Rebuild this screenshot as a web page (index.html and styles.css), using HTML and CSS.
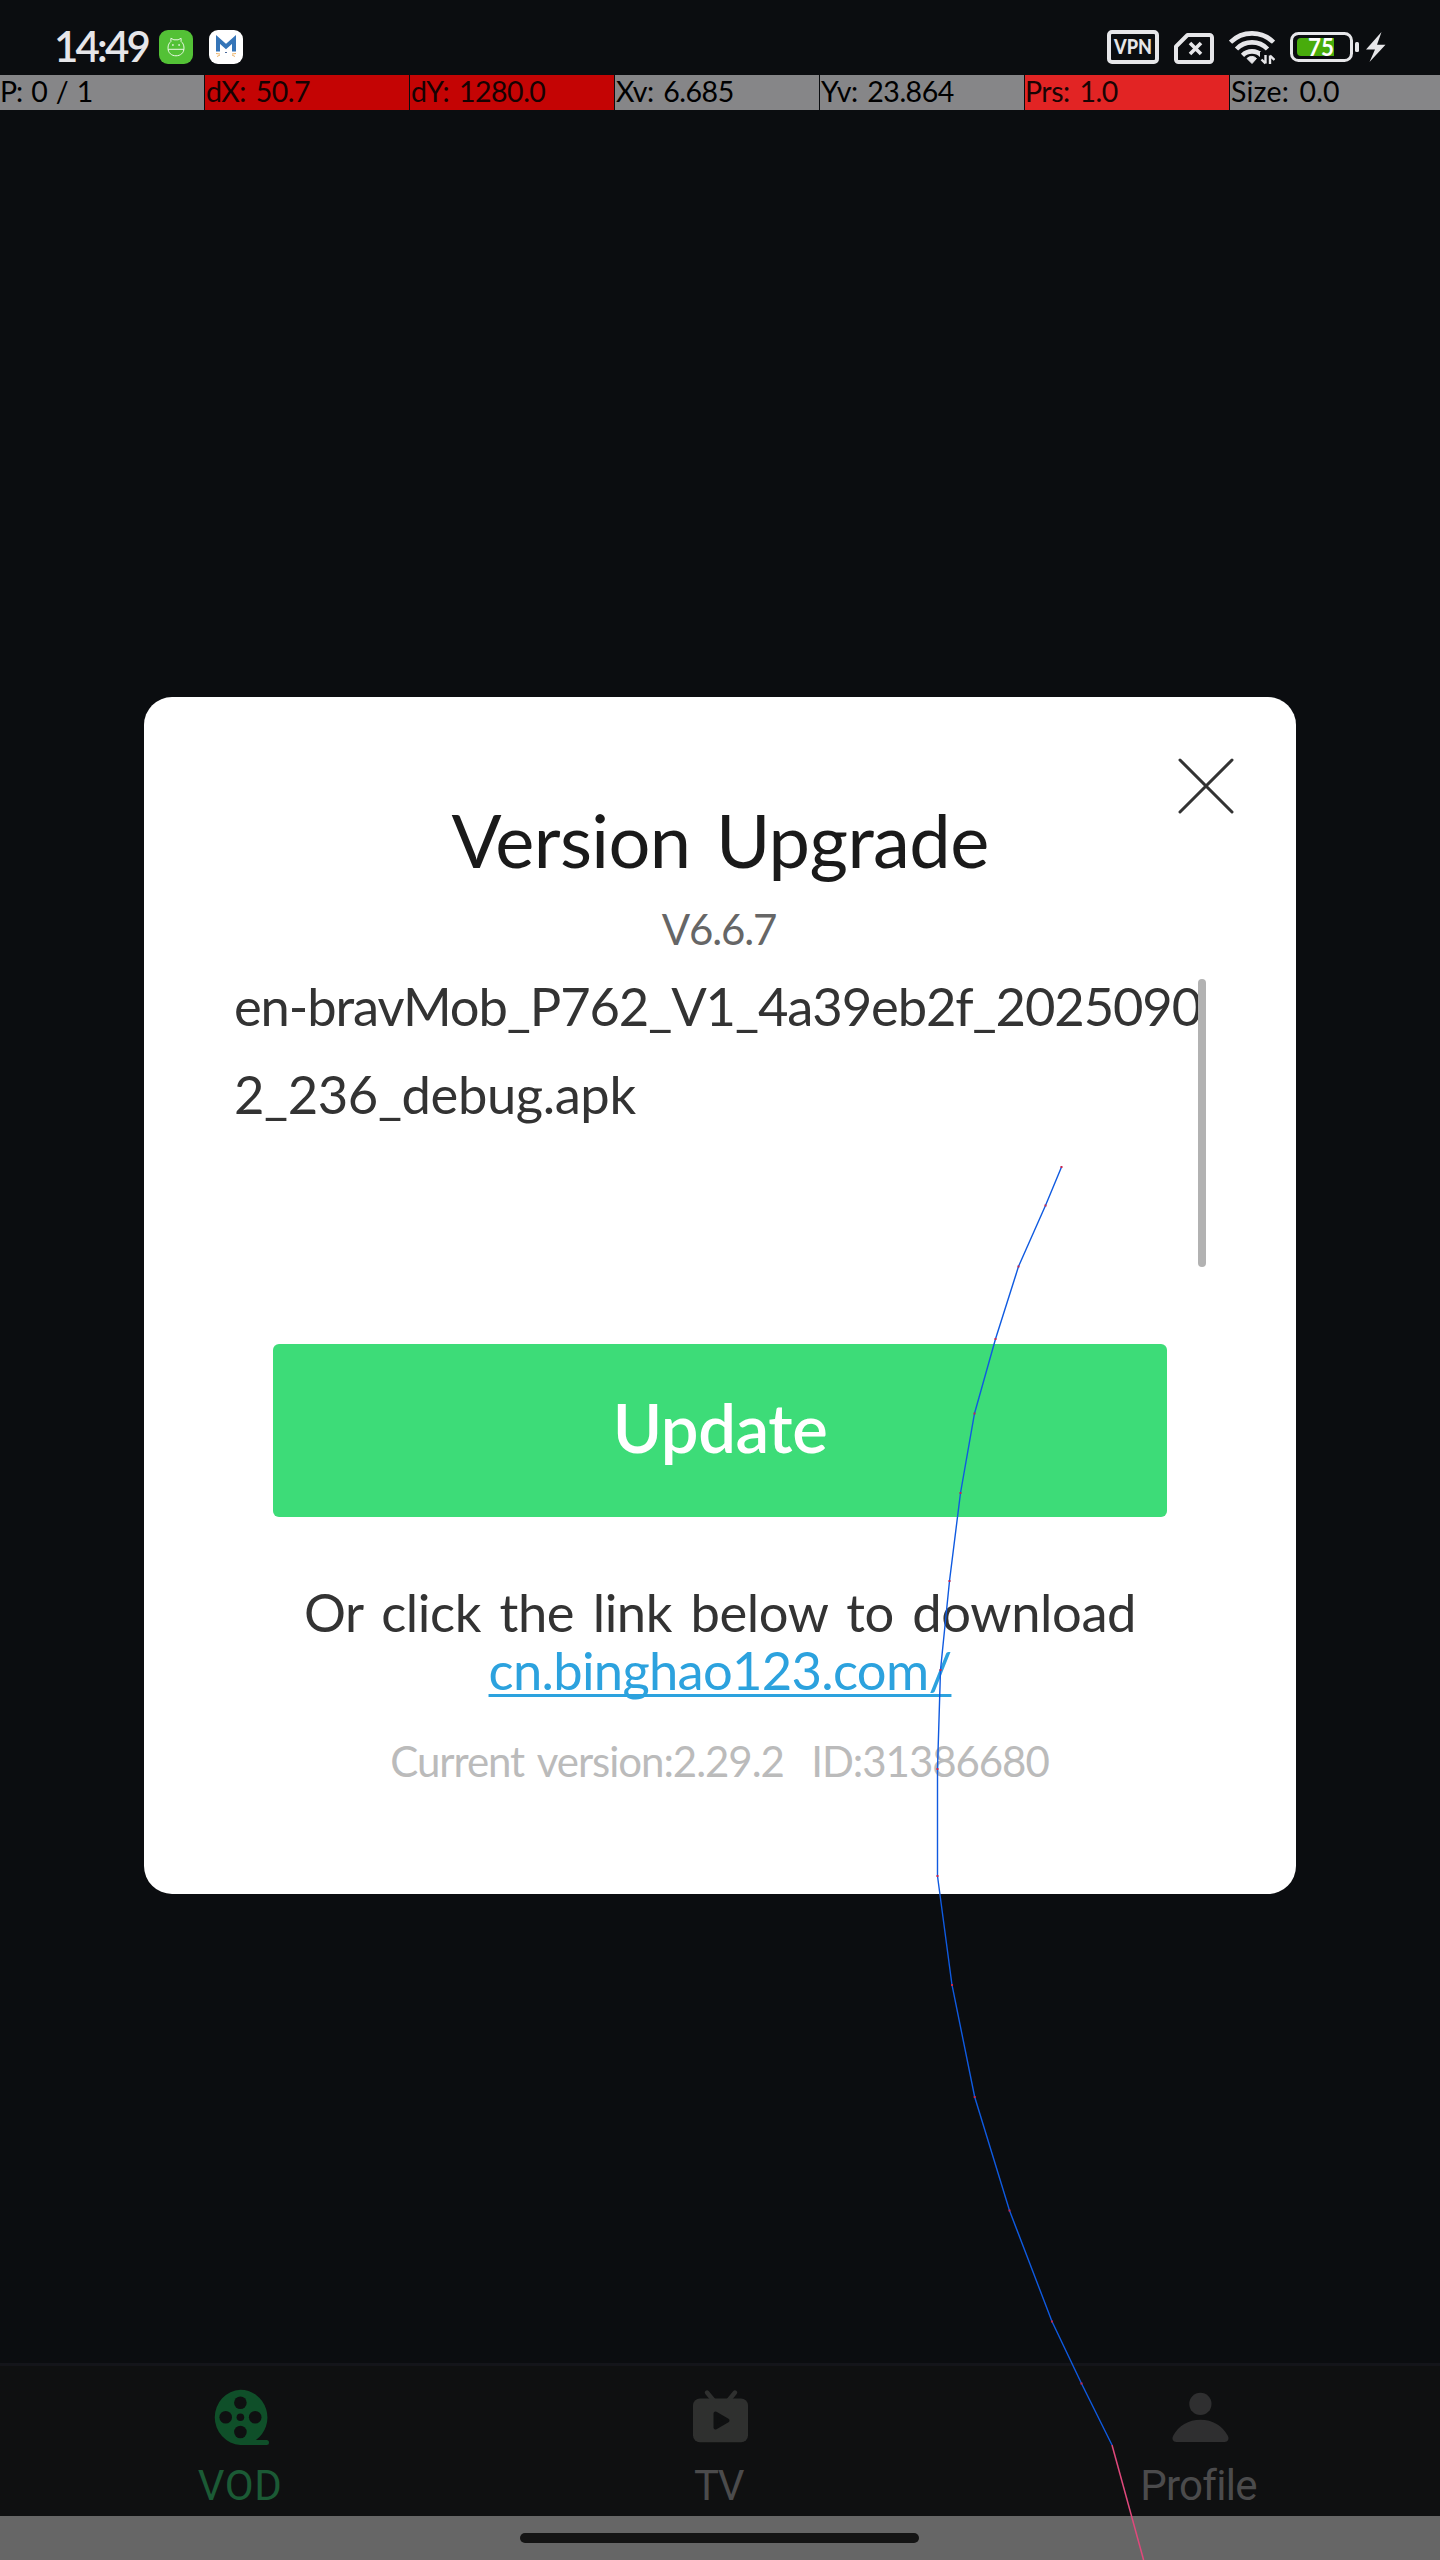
FILE: index.html
```html
<!DOCTYPE html>
<html lang="en">
<head>
<meta charset="utf-8">
<title>Version Upgrade</title>
<link rel="stylesheet" href="styles.css">
</head>
<body>
<div class="screen">
  <header class="status">
    <div class="status-left">
      <span class="clock">14:49</span>
      <svg class="app-icon" viewBox="0 0 34 34">
        <rect width="34" height="34" rx="9" fill="#53c136"/>
        <path d="M9 18.2c0-3.500 1.200-5.200 2.900-6.700V8.300l3 1.500h4.200l3-1.500v3.200c1.700 1.500 2.900 3.200 2.900 6.700 0 4.800-3.600 7.600-8 7.600s-8-2.800-8-7.600zM9 19.300h16" fill="none" stroke="#e9f9e4" stroke-width="1"/>
        <path d="M13.200 15h1.400M19.400 15h1.400" stroke="#fff" stroke-width="1.400"/>
      </svg>
      <svg class="app-icon" viewBox="0 0 34 34">
        <rect width="34" height="34" rx="9" fill="#fff"/>
        <path d="M9 21.500V9.500l8 7 8-7v12" fill="none" stroke="#3575b8" stroke-width="4"/>
        <path d="M7 23.500l4 .5M8 26.500l3-1.500M27 23.500l-4 .5M26 26.500l-3-1.500" stroke="#eeb56a" stroke-width="1"/>
        <path d="M16 22.500h2" stroke="#4b6a9a" stroke-width="1"/>
      </svg>
    </div>
    <div class="status-right">
      <svg class="vpn" viewBox="0 0 52 34">
        <rect x="2" y="2" width="48" height="30" rx="3" fill="none" stroke="#e6e6e9" stroke-width="4"/>
        <text x="26" y="24" text-anchor="middle" textLength="38" lengthAdjust="spacingAndGlyphs" class="vpn-text">VPN</text>
      </svg>
      <svg class="sim" viewBox="0 0 40 34">
        <path d="M13.500 5H35.500a2.500 2.500 0 0 1 2.500 2.500V29.500a2.500 2.500 0 0 1-2.500 2.500H4.500A2.500 2.500 0 0 1 2 29.500V16.500z" fill="none" stroke="#e6e6e9" stroke-width="4" stroke-linejoin="round"/>
        <path d="M16 13l11 11M27 13L16 24" stroke="#e6e6e9" stroke-width="3.600"/>
      </svg>
      <svg class="wifi" viewBox="0 0 46 36">
        <g fill="none" stroke="#e6e6e9" stroke-width="4.600">
          <path d="M1.500 13.200A30.500 30.500 0 0 1 44.500 13.200"/>
          <path d="M7.500 20A21.500 21.500 0 0 1 38.500 20"/>
          <path d="M13.500 26.300A13.500 13.500 0 0 1 32.500 26.300"/>
        </g>
        <path d="M18 29.500a6.500 6.500 0 0 1 9.500 0L23 34.500z" fill="#e6e6e9" stroke="#e6e6e9" stroke-linejoin="round"/>
        <path d="M31 23h15v13H31z" fill="#0b0d10"/>
        <path d="M36.500 26v8.500M32.500 30.500l4 4M41 35v-8.500M41 26.500l4.500 4.500" stroke="#e6e6e9" stroke-width="2.400"/>
      </svg>
      <svg class="battery" viewBox="0 0 96 34">
        <rect x="1.500" y="3.500" width="60" height="27" rx="7" fill="none" stroke="#e6e6e9" stroke-width="3"/>
        <path d="M11 8H44V26H11a4 4 0 0 1-4-4V12a4 4 0 0 1 4-4z" fill="#48ac0c"/>
        <rect x="65" y="12" width="4" height="10" rx="1.500" fill="#e6e6e9"/>
        <text x="31" y="25.500" text-anchor="middle" textLength="26" lengthAdjust="spacingAndGlyphs" class="battery-text">75</text>
        <path d="M91.500 2L76 19.500h9L79.500 32 95.500 14.800H87z" fill="#e6e6e9"/>
      </svg>
    </div>
  </header>

  <div class="pointer-bar">
    <span class="cell first">P: 0 / 1</span>
    <span class="cell hot">dX: 50.7</span>
    <span class="cell hot">dY: 1280.0</span>
    <span class="cell">Xv: 6.685</span>
    <span class="cell">Yv: 23.864</span>
    <span class="cell pressure">Prs: 1.0</span>
    <span class="cell size">Size: 0.0</span>
  </div>

  <main class="stage">
    <section class="dialog">
      <svg class="close" viewBox="0 0 60 60"><path d="M4 4L56 56M56 4L4 56" stroke="#333" stroke-width="3" stroke-linecap="round"/></svg>
      <h1 class="title">Version Upgrade</h1>
      <p class="version">V6.6.7</p>
      <div class="notes">
        <div class="notes-text">
          <div class="line-a">en-bravMob_P762_V1_4a39eb2f_2025090</div>
          <div class="line-b">2_236_debug.apk</div>
        </div>
        <div class="thumb"></div>
      </div>
      <button class="update">Update</button>
      <p class="hint">Or click the link below to download</p>
      <a class="link">cn.binghao123.com/</a>
      <p class="current">Current version:2.29.2&nbsp; ID:31386680</p>
    </section>
  </main>

  <nav class="tabs">
    <div class="tab active">
      <svg class="tab-icon" viewBox="0 0 60 60">
        <path d="M30.400 1.700a27.300 27.700 0 0 1 15.500 50.300h10.600a1.800 1.800 0 0 1 0 5H30.400a27.300 27.700 0 0 1 0-55.300z" fill="#0f4f29"/>
        <g fill="#0f1011"><circle cx="30.400" cy="14.700" r="6.300"/><circle cx="15.700" cy="29.200" r="6.300"/><circle cx="45.200" cy="29.200" r="6.300"/><circle cx="30.400" cy="44" r="6.300"/><circle cx="30.400" cy="29.200" r="3.800"/></g>
      </svg>
      <span class="tab-label vod">VOD</span>
    </div>
    <div class="tab">
      <svg class="tab-icon" viewBox="0 0 60 60">
        <path d="M17 4.500l7 8.500M45 4.500L38 13" stroke="#2f302f" stroke-width="4.400" stroke-linecap="round"/>
        <rect x="3" y="10.500" width="55" height="43.700" rx="7" fill="#2f302f"/>
        <path d="M25.500 25.500l12 7-12 7z" fill="#0f1011" stroke="#0f1011" stroke-width="4" stroke-linejoin="round"/>
      </svg>
      <span class="tab-label tv">TV</span>
    </div>
    <div class="tab">
      <svg class="tab-icon" viewBox="0 0 60 60">
        <circle cx="30.400" cy="15.900" r="11.100" fill="#2f2f30"/>
        <path d="M30.500 31.700c12 0 22 6 27.300 16 1.700 3.200.2 6.200-3.300 6.200H6.500c-3.500 0-5-3-3.300-6.200C8.500 37.700 18.500 31.700 30.500 31.700z" fill="#2f2f30"/>
      </svg>
      <span class="tab-label profile">Profile</span>
    </div>
  </nav>
  <div class="gesture"><div class="pill"></div></div>

  <svg class="trail" viewBox="0 0 1440 2560">
    <polyline points="1061.500,1167 1045.500,1205.500 1018.500,1266.500 995.500,1339 974.500,1413.500 960.500,1493 949.500,1581 940.500,1670 937.500,1769 937.500,1876 952,1985 974.700,2097 1009.500,2210.500 1052,2321.500 1081.500,2383.500 1112,2445" fill="none" stroke="#0f5ae0" stroke-width="1.400"/>
    <path d="M1112 2445L1143.600 2560" stroke="#e0487c" stroke-width="1.500"/>
    <path d="M1061.500 1166v2M1045.500 1204.500v2M1018.500 1265.500v2M995.500 1338v2M974.500 1412.500v2M960.500 1492v2M949.500 1580v2M940.500 1669v2M937.500 1768v2M937.500 1875v2M952 1984v2M974.700 2096v2M1009.500 2209.500v2M1052 2320.500v2M1081.500 2382.500v2" stroke="#c8254e" stroke-width="2"/>
  </svg>
</div>
</body>
</html>
```
FILE: styles.css
```css
* { box-sizing: border-box; margin: 0; padding: 0; }
body { background: #0b0d10; font-family: Lato, "Noto Sans", sans-serif; }
svg { display: block; flex: none; }

.screen {
  position: relative;
  display: flex;
  flex-direction: column;
  width: 1440px;
  height: 2560px;
  overflow: hidden;
}

.status {
  display: flex;
  justify-content: space-between;
  align-items: center;
  height: 75px;
  padding: 19px 54px 0 54px;
}
.status-left, .status-right { display: flex; align-items: center; }
.status-left { gap: 16px; }
.clock {
  width: 89px;
  margin-bottom: 2px;
  color: #e6e6e9;
  font-size: 42px;
  font-weight: 600;
  line-height: 50px;
  letter-spacing: -2.8px;
  white-space: nowrap;
}
.app-icon { width: 34px; height: 34px; }
.status-right { gap: 15px; }
.vpn { width: 52px; height: 34px; }
.vpn-text { font: 900 21px Lato, sans-serif; fill: #e6e6e9; }
.sim { width: 40px; height: 34px; }
.wifi { width: 46px; height: 36px; }
.battery { width: 96px; height: 34px; }
.battery-text { font: 700 25px Lato, sans-serif; fill: #fff; }

.pointer-bar {
  display: grid;
  grid-template-columns: repeat(6, 204px) 1fr;
  gap: 1px;
  height: 35px;
}
.cell {
  padding-left: 1px;
  background: #868688;
  color: #000;
  font-size: 28.5px;
  line-height: 33px;
  letter-spacing: -0.5px;
  word-spacing: 3px;
  white-space: nowrap;
}
.first { padding-left: 0; letter-spacing: -1.1px; }
.hot { background: #c40404; color: #160202; }
.pressure { padding-left: 0; background: #e22424; color: #1a0404; }
.size { letter-spacing: 0.2px; }

.stage { flex: 1; padding: 587px 144px 0; }
.dialog {
  position: relative;
  display: flex;
  flex-direction: column;
  align-items: center;
  height: 1197px;
  padding-top: 98px;
  border-radius: 28px;
  background: #fff;
}
.close { position: absolute; top: 59px; right: 60px; width: 60px; height: 60px; }
.title {
  color: #1a1a1a;
  font-size: 74px;
  font-weight: 400;
  line-height: 90px;
  letter-spacing: -0.6px;
  word-spacing: 7px;
}
.version {
  margin-top: 19px;
  color: #666;
  font-size: 42px;
  line-height: 50px;
  letter-spacing: -1.1px;
  padding-right: 2px;
}
.notes {
  display: flex;
  align-self: stretch;
  align-items: flex-end;
  height: 305px;
  margin: 8px 90px 0 90px;
}
.notes-text {
  flex: 1;
  align-self: flex-start;
  color: #333;
  font-size: 52.5px;
  line-height: 88px;
  white-space: nowrap;
}
.line-a { width: 964px; letter-spacing: -1.1px; }
.line-b { letter-spacing: -0.4px; }
.thumb { flex: none; width: 8px; height: 288px; border-radius: 4px; background: #b2b2b2; z-index: 1; }
.update {
  width: 894px;
  height: 173px;
  margin-top: 77px;
  padding-bottom: 6px;
  border: 0;
  border-radius: 6px;
  background: #3ddc78;
  color: #fff;
  font: 600 67px/167px Lato, sans-serif;
  letter-spacing: -0.4px;
}
.hint, .link { font-size: 52.5px; line-height: 58px; }
.hint { margin-top: 66px; color: #333; letter-spacing: -0.4px; word-spacing: 5.5px; }
.link {
  color: #2ca2de;
  letter-spacing: -0.7px;
  text-decoration: underline;
  text-decoration-thickness: 3px;
  text-underline-offset: 4px;
  text-decoration-skip-ink: none;
}
.current {
  margin-top: 37px;
  color: #bbb;
  font-size: 42px;
  line-height: 50px;
  letter-spacing: -1.05px;
  word-spacing: 4px;
  padding-right: 1px;
}

.tabs {
  display: grid;
  grid-template-columns: repeat(3, 1fr);
  height: 153px;
  padding-top: 22px;
  border-top: 3px solid #14151a;
  background: #0f1011;
}
.tab { display: flex; flex-direction: column; align-items: center; gap: 12px; color: #4b4b4c; }
.active { color: #1b5a35; }
.tab-icon { width: 60px; height: 60px; }
.tab-label { font-family: Roboto, sans-serif; font-size: 42px; line-height: 51px; }
.vod { letter-spacing: 0.6px; }
.tv { letter-spacing: -1.5px; padding-right: 3px; }
.profile { letter-spacing: -0.7px; padding-right: 3px; }

.gesture { display: flex; justify-content: center; height: 44px; padding: 17px 1px 0 0; background: #666; }
.pill { width: 399px; height: 10px; border-radius: 5px; background: #141414; }

.trail { position: absolute; inset: 0; width: 1440px; height: 2560px; z-index: 2; }
```
